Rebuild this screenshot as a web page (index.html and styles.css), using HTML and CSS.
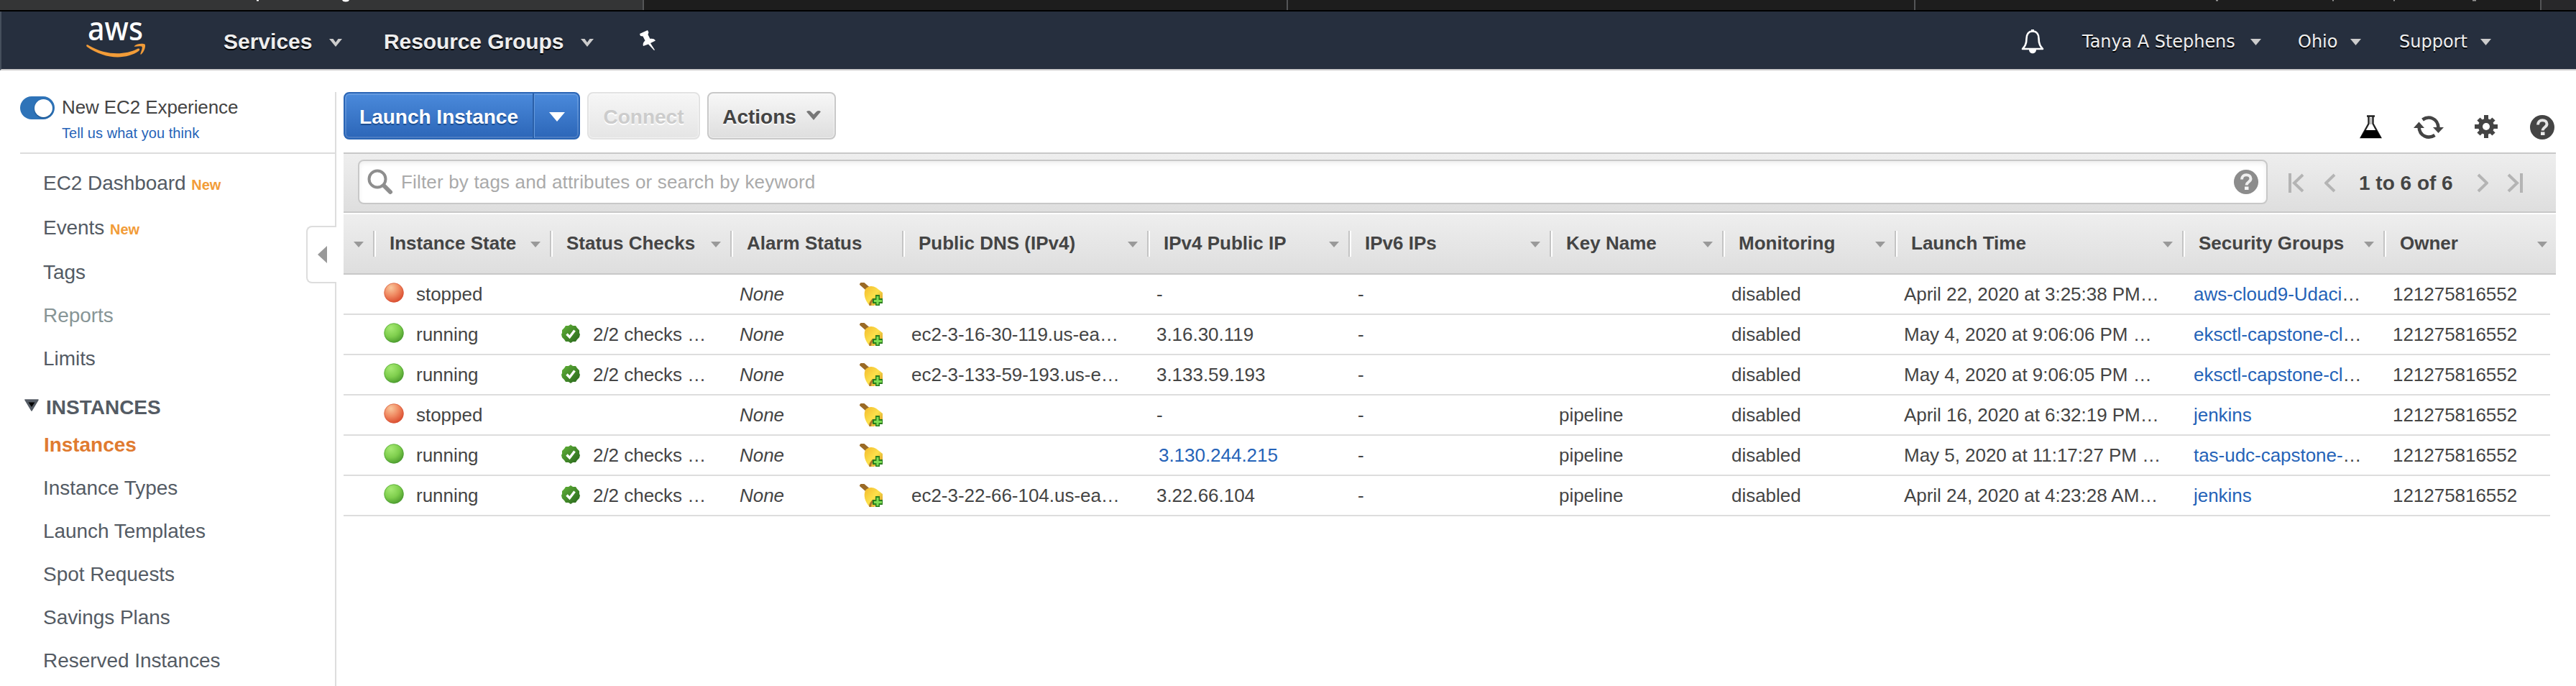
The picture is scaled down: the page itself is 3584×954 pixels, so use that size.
FILE: index.html
```html
<!DOCTYPE html>
<html lang="en">
<head>
<meta charset="utf-8">
<title>Instances | EC2 Management Console</title>
<link rel="stylesheet" href="styles.css">
</head>
<body>
<svg class="defs" width="0" height="0">
  <defs>
    <radialGradient id="g-red" cx=".35" cy=".25" r=".8"><stop offset="0" stop-color="#f9c79c"/><stop offset=".5" stop-color="#f08a62"/><stop offset="1" stop-color="#d9482b"/></radialGradient>
    <radialGradient id="g-green" cx=".35" cy=".25" r=".8"><stop offset="0" stop-color="#a6ea74"/><stop offset=".55" stop-color="#7fce4d"/><stop offset="1" stop-color="#4a9a2c"/></radialGradient>
    <linearGradient id="g-check" x1="0" y1="0" x2="1" y2="1"><stop offset="0" stop-color="#62b338"/><stop offset="1" stop-color="#27651c"/></linearGradient>
    <linearGradient id="g-bell" x1="0" y1="0" x2="1" y2="1"><stop offset="0" stop-color="#f3b92c"/><stop offset=".5" stop-color="#fce04a"/><stop offset="1" stop-color="#cf8f23"/></linearGradient>
    <symbol id="red" viewBox="0 0 28 28"><circle cx="14" cy="14" r="13.6" fill="url(#g-red)"/><circle cx="14" cy="14" r="13.2" fill="none" stroke="#d5563a" stroke-opacity=".6"/></symbol>
    <symbol id="green" viewBox="0 0 28 28"><circle cx="14" cy="14" r="13.6" fill="url(#g-green)"/><circle cx="14" cy="14" r="13.2" fill="none" stroke="#4b9c33" stroke-opacity=".6"/></symbol>
    <symbol id="check" viewBox="0 0 26 26"><path d="M13 0l3 2 4 0 2 3 3 3 0 4 1 2-1 4-3 3-2 3-4 0-3 2-3-2-4 0-2-3-3-3-1-4 1-2 0-4 3-3 2-3 4 0z" fill="url(#g-check)"/><path d="M7.500 13.500l4 4.200 7-9.200" fill="none" stroke="#fff" stroke-width="3.400"/></symbol>
    <symbol id="alarm" viewBox="0 0 32 32"><path d="M1.500 0L13 10" stroke="#9a6a26" stroke-width="6.500"/><path d="M8 9c4-5 10-5 15-2l9 7v10L20 32h-6C7 25 5 15 8 9z" fill="url(#g-bell)"/><path d="M15 32c-1-3 1-6 4-9" fill="none" stroke="#a9732a" stroke-width="3"/><path d="M22 17h6v5h4v7h-4v3h-6v-3h-4v-7h4z" fill="#2a7d1d"/><path d="M25 19v11.500M20 25.500h11" stroke="#7ede54" stroke-width="3"/></symbol>
    <symbol id="help" viewBox="0 0 34 34"><circle cx="17" cy="17" r="17" fill="currentColor"/><path d="M11 13.500c0-4 2.700-6.300 6.300-6.300 3.500 0 6.200 2 6.200 5.400 0 4.500-5.800 4.300-5.800 8.800" fill="none" stroke="#fff" stroke-opacity=".85" stroke-width="4"/><rect x="15" y="23.500" width="5.500" height="4.500" fill="#fff" fill-opacity=".9"/></symbol>
    <symbol id="chev" viewBox="0 0 18 11"><path d="M0 0h5.500L9 5l3.500-5H18L9 11z" fill="currentColor"/></symbol>
    <symbol id="caret" viewBox="0 0 15 9"><path d="M0 0h15L7.500 9z" fill="currentColor"/></symbol>
  </defs>
</svg>

<div class="tabstrip">
  <div class="tab tab-active"><svg width="500" height="3"><path d="M357 0h3v1.500h-3zM476 0h10q-1 2.500-5 2.500T476 0z" fill="#fff"/></svg></div>
  <div class="tab tab-b"></div>
  <div class="tab tab-c"></div>
  <div class="tab tab-d"><svg width="800" height="2"><path d="M418 0h3v1.500h-3zM580 0h2v1.500h-2zM665 0h2v1.500h-2zM775 0h5v1.500h-5z" fill="#999"/></svg></div>
  <div class="tab tab-e"></div>
</div>

<header class="topnav">
  <svg class="logo" width="84" height="54" viewBox="0 0 84 54">
    <text x="2" y="25" font-size="46" textLength="77" lengthAdjust="spacingAndGlyphs" class="logo-text">aws</text>
    <path d="M0.500 31.500c1-.7 2 0 3.500 1C27 46 53 46 71 37c3-1.300 4.500 1 2 3C55 52.500 25 51.500 1 34c-1-1-1-2-.5-2.500z" fill="#f29c38"/>
    <path d="M67 33c3-3.500 12-4 14.500-2.500 2 3-1.500 11.500-5 14-1 .5-1.500 0-1-1 1-3 3-8 2-9.500-1.500-1-6-.6-9.500-.2-1.300.1-1.500-.3-1-.8z" fill="#f29c38"/>
  </svg>
  <a class="nav nav-services">Services<svg class="chev" width="18" height="11"><use href="#chev"/></svg></a>
  <a class="nav nav-groups">Resource Groups<svg class="chev" width="18" height="11"><use href="#chev"/></svg></a>
  <svg class="pin" width="24" height="28" viewBox="0 0 24 28"><path d="M1 5L12 0l1.500 3-1 3 3 6c3-.5 6 0 7.500 2.500l-7 3.500 6 9.500-1 .5-8-8.500L6 22c-1-3 .5-6 2.500-7.500l-3-6L2 8z" fill="#fff"/></svg>
  <div class="account">
    <svg class="bell" width="32" height="34" viewBox="0 0 32 34"><path d="M16 2.500c-6 0-8.500 4.500-8.500 10 0 8-2.500 11-5.500 14.500h28c-3-3.500-5.500-6.500-5.500-14.500 0-5.500-2.500-10-8.500-10z" fill="none" stroke="#fff" stroke-width="2.600" stroke-linejoin="round"/><path d="M14 0h4v3h-4zM11 28h10c0 7-10 7-10 0z" fill="#fff"/></svg>
    <a class="acct acct-user">Tanya A Stephens<svg class="chev" width="15" height="9"><use href="#caret"/></svg></a>
    <a class="acct acct-region">Ohio<svg class="chev" width="15" height="9"><use href="#caret"/></svg></a>
    <a class="acct acct-support">Support<svg class="chev" width="15" height="9"><use href="#caret"/></svg></a>
  </div>
</header>

<div class="page">
  <aside class="sidebar">
    <div class="experience">
      <div class="toggle"><i></i></div>
      <div class="exp-text"><div class="exp-title">New EC2 Experience</div><a class="exp-link">Tell us what you think</a></div>
    </div>
    <nav class="menu">
      <a class="item item-dash">EC2 Dashboard <b>New</b></a>
      <a class="item item-events">Events <b>New</b></a>
      <a class="item item-tags">Tags</a>
      <a class="item item-muted">Reports</a>
      <a class="item">Limits</a>
      <div class="group"><svg width="20" height="17" viewBox="0 0 20 17"><path d="M1 1h18L10 16z" fill="#545b64" stroke="#545b64" stroke-width="1.500" stroke-linejoin="round"/><path d="M5.500 4.500h9L10 11z" fill="#000"/></svg>INSTANCES</div>
      <a class="item item-current">Instances</a>
      <a class="item">Instance Types</a>
      <a class="item">Launch Templates</a>
      <a class="item">Spot Requests</a>
      <a class="item">Savings Plans</a>
      <a class="item">Reserved Instances</a>
    </nav>
    <div class="collapse"><svg width="13" height="24"><path d="M13 0v24L0 12z" fill="#999"/></svg></div>
  </aside>

  <main class="main">
    <div class="toolbar">
      <div class="btn btn-primary"><span class="btn-label">Launch Instance</span><span class="btn-drop"><svg width="22" height="13"><path d="M0 0h22L11 13z" fill="#fff"/></svg></span></div>
      <div class="btn btn-disabled">Connect</div>
      <div class="btn btn-actions">Actions<svg width="20" height="13" viewBox="0 0 18 11" preserveAspectRatio="none"><path d="M0 1q3-2 5.500 0L9 4.500 12.500 1q3-2 5.500 0L9 11z" fill="#777"/></svg></div>
      <div class="tools">
        <svg class="t-flask" width="31" height="33" viewBox="0 0 31 33"><path d="M10 1.500h11M12.500 2v10L2 31h27L18.500 12V2" fill="none" stroke="#222" stroke-width="2.400"/><path d="M7.500 21h16l6.500 11H1z" fill="#000"/><path d="M15.500 4v9" stroke="#aaa" stroke-width="2"/></svg>
        <svg class="t-refresh" width="42" height="32" viewBox="0 0 42 32"><g fill="none" stroke="#444" stroke-width="4.600"><path d="M12.500 5.500C21-.5 34 3 34.500 17"/><path d="M29.500 27C21 32.500 8 29 7.500 15"/></g><path d="M27 16h15l-7.500 8zM0 17h15L7.500 8.500z" fill="#444"/></svg>
        <svg class="t-gear" width="32" height="32" viewBox="0 0 32 32"><g stroke="#444" stroke-width="6"><path d="M16 0v32M0 16h32M5.500 5.500l21 21M26.500 5.500l-21 21"/></g><circle cx="16" cy="16" r="11" fill="#444"/><circle cx="16" cy="16" r="5" fill="#fff"/></svg>
        <svg class="t-help" width="34" height="34"><use href="#help"/></svg>
      </div>
    </div>

    <div class="filterbar">
      <div class="search">
        <svg width="38" height="38" viewBox="0 0 38 38"><circle cx="14" cy="15" r="11.500" fill="none" stroke="#8e8e8e" stroke-width="4"/><path d="M24 25l8 8" stroke="#8e8e8e" stroke-width="6" stroke-linecap="round"/></svg>
        <span class="placeholder">Filter by tags and attributes or search by keyword</span>
        <svg class="s-help" width="34" height="34"><use href="#help"/></svg>
      </div>
      <div class="pager">
        <svg class="p-first" width="22" height="27"><path d="M2 0v27M20 2L8 13.500 20 25" /></svg>
        <svg class="p-prev" width="16" height="27"><path d="M14 2L2 13.500 14 25"/></svg>
        <span class="range">1 to 6 of 6</span>
        <svg class="p-next" width="16" height="27"><path d="M2 2l12 11.500L2 25"/></svg>
        <svg class="p-last" width="22" height="27"><path d="M20 0v27M2 2l12 11.500L2 25"/></svg>
      </div>
    </div>

    <div class="grid thead">
      <div class="th"><i></i></div>
      <div class="th">Instance State<i></i></div>
      <div class="th">Status Checks<i></i></div>
      <div class="th">Alarm Status</div>
      <div class="th">Public DNS (IPv4)<i></i></div>
      <div class="th">IPv4 Public IP<i></i></div>
      <div class="th">IPv6 IPs<i></i></div>
      <div class="th">Key Name<i></i></div>
      <div class="th">Monitoring<i></i></div>
      <div class="th">Launch Time<i></i></div>
      <div class="th">Security Groups<i></i></div>
      <div class="th th-last">Owner<i></i></div>
    </div>

    <div class="grid row"><span></span><span class="state"><svg width="28" height="28"><use href="#red"/></svg>stopped</span><span></span><span class="alarm"><em>None</em><svg width="32" height="32"><use href="#alarm"/></svg></span><span></span><span>-</span><span>-</span><span></span><span>disabled</span><span>April 22, 2020 at 3:25:38 PM…</span><span class="sg"><a>aws-cloud9-Udaci</a>…</span><span>121275816552</span></div>
    <div class="grid row"><span></span><span class="state"><svg width="28" height="28"><use href="#green"/></svg>running</span><span class="checks"><svg width="26" height="26"><use href="#check"/></svg>2/2 checks …</span><span class="alarm"><em>None</em><svg width="32" height="32"><use href="#alarm"/></svg></span><span>ec2-3-16-30-119.us-ea…</span><span>3.16.30.119</span><span>-</span><span></span><span>disabled</span><span>May 4, 2020 at 9:06:06 PM …</span><span class="sg"><a>eksctl-capstone-cl</a>…</span><span>121275816552</span></div>
    <div class="grid row"><span></span><span class="state"><svg width="28" height="28"><use href="#green"/></svg>running</span><span class="checks"><svg width="26" height="26"><use href="#check"/></svg>2/2 checks …</span><span class="alarm"><em>None</em><svg width="32" height="32"><use href="#alarm"/></svg></span><span>ec2-3-133-59-193.us-e…</span><span>3.133.59.193</span><span>-</span><span></span><span>disabled</span><span>May 4, 2020 at 9:06:05 PM …</span><span class="sg"><a>eksctl-capstone-cl</a>…</span><span>121275816552</span></div>
    <div class="grid row"><span></span><span class="state"><svg width="28" height="28"><use href="#red"/></svg>stopped</span><span></span><span class="alarm"><em>None</em><svg width="32" height="32"><use href="#alarm"/></svg></span><span></span><span>-</span><span>-</span><span>pipeline</span><span>disabled</span><span>April 16, 2020 at 6:32:19 PM…</span><span class="sg"><a>jenkins</a></span><span>121275816552</span></div>
    <div class="grid row"><span></span><span class="state"><svg width="28" height="28"><use href="#green"/></svg>running</span><span class="checks"><svg width="26" height="26"><use href="#check"/></svg>2/2 checks …</span><span class="alarm"><em>None</em><svg width="32" height="32"><use href="#alarm"/></svg></span><span></span><span class="sg"><a>3.130.244.215</a></span><span>-</span><span>pipeline</span><span>disabled</span><span>May 5, 2020 at 11:17:27 PM …</span><span class="sg"><a>tas-udc-capstone-</a>…</span><span>121275816552</span></div>
    <div class="grid row"><span></span><span class="state"><svg width="28" height="28"><use href="#green"/></svg>running</span><span class="checks"><svg width="26" height="26"><use href="#check"/></svg>2/2 checks …</span><span class="alarm"><em>None</em><svg width="32" height="32"><use href="#alarm"/></svg></span><span>ec2-3-22-66-104.us-ea…</span><span>3.22.66.104</span><span>-</span><span>pipeline</span><span>disabled</span><span>April 24, 2020 at 4:23:28 AM…</span><span class="sg"><a>jenkins</a></span><span>121275816552</span></div>
  </main>
</div>
</body>
</html>
```
FILE: styles.css
```css
* { box-sizing: border-box; }
body { margin: 0; width: 3584px; height: 954px; overflow: hidden; background: #fff; color: #444; font-family: "Liberation Sans", Arial, sans-serif; font-size: 26px; }
svg { display: block; flex: none; }
.defs { position: absolute; }

.tabstrip { display: flex; height: 16px; background: #1c1c1c; border-bottom: 2px solid #000; }
.tab { background: #1d1d1d; border-right: 2px solid #545557; }
.tab-active { width: 896px; background: #343536; }
.tab-b { width: 896px; }
.tab-c { width: 873px; }
.tab-d { width: 871px; }
.tab-e { flex: 1; background: #28282a; border: 0; }

.topnav { display: flex; align-items: flex-start; height: 82px; background: #262f3e; border-bottom: 2px solid #ccc; border-left: 2px solid #454f5c; padding-left: 118px; color: #eee; text-shadow: 0 2px 0 #000; }
.logo { margin-top: 15px; width: 84px; height: 54px; overflow: visible; }
.logo-text { font-family: "Noto Sans", "Open Sans", sans-serif; font-weight: 500; fill: #fff; text-shadow: none; }
.nav { display: flex; align-items: center; height: 80px; padding-top: 4px; font-size: 30px; font-weight: 700; letter-spacing: 0; }
.nav .chev { margin-left: auto; margin-top: 2px; color: #ccc; }
.nav-services { width: 165px; margin-left: 107px; }
.nav-groups { width: 292px; margin-left: 58px; letter-spacing: -.1px; }
.pin { margin: 26px 0 0 63px; }
.account { display: flex; align-items: center; height: 80px; margin-left: auto; padding-right: 118px; font-family: "DejaVu Sans", Verdana, sans-serif; font-size: 24px; }
.bell { margin-right: 53px; margin-top: 3px; }
.acct { display: flex; align-items: center; padding-top: 3px; white-space: nowrap; }
.acct .chev { margin-left: auto; margin-top: 2px; color: #ccc; }
.acct-user { width: 249px; letter-spacing: -.05px; }
.acct-region { width: 88px; margin-left: 51px; }
.acct-support { width: 128px; margin-left: 53px; }

.page { display: flex; height: 856px; }
.sidebar { position: relative; width: 468px; margin-top: 30px; border-right: 2px solid #ddd; }
.experience { display: flex; height: 86px; margin-left: 28px; border-bottom: 2px solid #ddd; }
.toggle { display: flex; justify-content: flex-end; align-items: center; width: 48px; height: 32px; margin-top: 6px; padding-right: 3px; border-radius: 16px; background: #2e73b8; }
.toggle i { width: 25px; height: 25px; border-radius: 50%; background: #fff; box-shadow: 0 1px 2px #154a80; }
.exp-text { margin-left: 10px; white-space: nowrap; }
.exp-title { margin-top: 4px; font-size: 26px; line-height: 34px; letter-spacing: -.1px; }
.exp-link { display: block; margin-top: 6px; font-size: 20px; line-height: 26px; letter-spacing: .05px; color: #2563b8; }
.menu { padding: 9px 0 0 60px; font-size: 28px; color: #545b64; }
.item { display: block; height: 60px; line-height: 60px; white-space: nowrap; letter-spacing: -.05px; }
.item b { font-size: 20px; color: #f29c38; }
.item-dash { height: 63px; line-height: 63px; }
.item-events { height: 62px; line-height: 62px; }
.item-tags { height: 61px; line-height: 61px; }
.item-muted { color: #879596; }
.item-current { color: #e07b30; font-weight: 700; padding-left: 1px; }
.group { display: flex; align-items: center; gap: 10px; height: 43px; margin: 16px 0 1px -26px; font-weight: 700; line-height: 43px; }
.group svg { margin-top: -6px; }
.collapse { position: absolute; right: -2px; top: 186px; display: flex; align-items: center; justify-content: center; width: 42px; height: 80px; padding-left: 1px; background: #fff; border: 2px solid #ddd; border-right: 0; border-radius: 8px 0 0 8px; }

.main { width: 3078px; margin-left: 10px; padding-top: 30px; }
.toolbar { display: flex; align-items: flex-start; height: 84px; font-size: 28px; font-weight: 700; }
.btn { display: flex; align-items: center; justify-content: center; height: 66px; border: 2px solid #c8c8c8; border-radius: 8px; background: linear-gradient(#f7f7f7, #dedede); box-shadow: inset 0 0 0 1px rgba(255, 255, 255, .5); text-shadow: 0 2px 0 #fff; white-space: nowrap; padding-top: 3px; }
.btn-primary { align-items: stretch; width: 329px; padding: 0; border-color: #2a65b5; background: linear-gradient(#4b8adb, #2c66b8); box-shadow: inset 0 0 0 2px rgba(255, 255, 255, .15); color: #fff; text-shadow: 0 2px 1px #1d4c8e; }
.btn-label { display: flex; align-items: center; justify-content: center; width: 263px; padding-top: 3px; border-right: 2px solid #2a5fa8; }
.btn-drop { display: flex; align-items: center; justify-content: center; flex: 1; border-left: 1px solid #659bdf; padding-top: 3px; }
.btn-disabled { width: 157px; margin-left: 10px; border-color: #e2e2e2; color: #ccc; background: linear-gradient(#f6f6f6, #e5e5e5); }
.btn-actions { width: 179px; margin-left: 10px; }
.btn-actions svg { margin: -5px 0 0 14px; }
.tools { display: flex; margin: 32px 2px 0 auto; color: #444; }
.t-refresh { margin: 1px 0 0 44px; }
.t-gear { margin-left: 43px; }
.t-help { margin-left: 45px; }

.filterbar { display: flex; align-items: center; height: 84px; padding-left: 20px; border-top: 2px solid #c8c8c8; border-bottom: 2px solid #c8c8c8; background: linear-gradient(#eee, #dedede); }
.search { display: flex; align-items: center; width: 2657px; height: 62px; margin-bottom: 2px; padding: 0 11px; background: #fff; border: 2px solid #c8c8c8; border-radius: 8px; box-shadow: inset 0 3px 6px #eee; }
.placeholder { margin-left: 9px; font-size: 26px; letter-spacing: .17px; color: #aaa; }
.s-help { margin-left: auto; color: #8c8c8c; }
.pager { display: flex; align-items: center; margin-left: 29px; font-size: 28px; font-weight: 700; }
.pager path { fill: none; stroke: #b4b4b4; stroke-width: 4; }
.p-prev { margin-left: 28px; }
.range { width: 131px; margin: 2px 33px 0 32px; white-space: nowrap; }
.p-last { margin-left: 26px; }

.grid { display: grid; grid-template-columns: 43px 246px 251px 239px 341px 280px 280px 240px 240px 400px 280px 238px; }
.thead { height: 84px; margin-top: 2px; border-bottom: 2px solid #c8c8c8; background: linear-gradient(#eee, #dedede); font-weight: 700; align-items: center; padding-bottom: 1px; }
.th { display: flex; align-items: center; height: 36px; padding: 0 13px 1px 21px; border-right: 2px solid #c4c4c4; box-shadow: 2px 0 0 #fff; white-space: nowrap; }
.th:first-child { padding-left: 0; }
.th i { width: 14px; height: 8px; margin: 4px 0 0 auto; background: #999; clip-path: polygon(0 0, 100% 0, 50% 100%); }
.th-last { border: 0; box-shadow: none; padding-right: 12px; }
.row { width: 3070px; height: 56px; border-bottom: 2px solid #ddd; line-height: 54px; white-space: nowrap; }
.row > span { padding-left: 11px; min-width: 0; letter-spacing: -.03px; }
.row a { color: #2563b8; }
.row > .sg { padding-left: 14px; }
.row > .state, .row > .checks, .row > .alarm { display: flex; align-items: center; }
.row > .state { padding-left: 13px; gap: 17px; }
.row > .state svg { margin-top: -5px; }
.row > .checks { padding-left: 14px; gap: 18px; }
.row > .checks svg { margin-top: -2px; }
.row > .alarm svg { margin: -1px 0 0 auto; }
.row > .alarm { padding-right: 29px; }
```
